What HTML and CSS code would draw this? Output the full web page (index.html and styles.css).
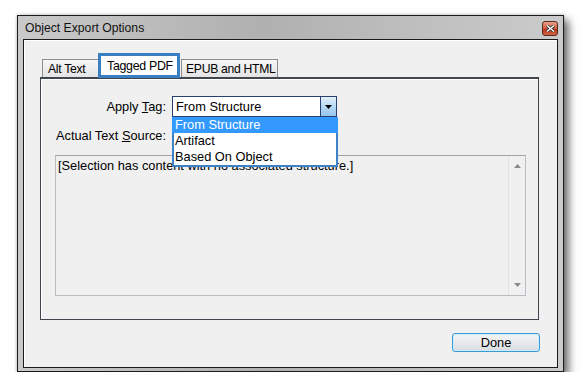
FILE: index.html
```html
<!DOCTYPE html>
<html lang="en">
<head>
    <meta charset="UTF-8">
    <title>Object Export Options</title>
    <link rel="stylesheet" href="styles.css">
</head>
<body>
    <div class="window">
        <div class="titlebar">
            <span class="title">Object Export Options</span>
            <span class="close">
                <svg width="9" height="7" viewBox="0 0 9 7">
                    <path d="M1 0.5 L8 6.5 M8 0.5 L1 6.5" stroke="#333" stroke-width="3"/>
                    <path d="M1 0.5 L8 6.5 M8 0.5 L1 6.5" stroke="#fff" stroke-width="1.4"/>
                </svg>
            </span>
        </div>
        <div class="client">
            <!-- Tabs -->
            <div class="tabs">
                <div class="tab">Alt Text</div>
                <div class="tab active">Tagged PDF</div>
                <div class="tab">EPUB and HTML</div>
            </div>
            <div class="panel">
                <div class="form">
                    <label class="lbl">Apply <u>T</u>ag:</label>
                    <div class="select open">
                        <span class="value">From Structure</span>
                        <span class="arrow">
                            <svg width="7" height="4" viewBox="0 0 7 4"><path d="M0 0 H7 L3.5 4 Z" fill="#000"/></svg>
                        </span>
                        <ul class="list">
                            <li class="selected">From Structure</li>
                            <li>Artifact</li>
                            <li>Based On Object</li>
                        </ul>
                    </div>
                    <label class="lbl">Actual Text <u>S</u>ource:</label>
                    <div class="select under">
                        <span class="value"></span>
                    </div>
                </div>
                <div class="textbox">
                    <div class="text">[Selection has content with no associated structure.]</div>
                    <div class="scroll">
                        <svg width="7" height="4" viewBox="0 0 7 4"><path d="M0 4 H7 L3.5 0 Z" fill="#8a8a8a"/></svg>
                        <svg width="7" height="4" viewBox="0 0 7 4"><path d="M0 0 H7 L3.5 4 Z" fill="#8a8a8a"/></svg>
                    </div>
                </div>
            </div>
            <div class="footer">
                <button class="done">Done</button>
            </div>
        </div>
    </div>
</body>
</html>
```

FILE: styles.css
```css
body {
    margin: 0;
    padding: 15px 0 0 17px;
    background: #ffffff;
    font-family: "Liberation Sans", Arial, sans-serif;
    font-size: 12.8px;
    color: #000000;
}
.window {
    box-sizing: border-box;
    width: 547px;
    height: 357px;
    border: 1px solid #1b1b1b;
    padding: 0 5px 3px 5px;
    background: linear-gradient(to right, #c9c9c9, #b0b0b0 45%, #bdbdbd 70%, #cbcbcb);
    box-shadow: 0 0 3px rgba(0, 0, 0, 0.25), 5px 5px 8px rgba(0, 0, 0, 0.55);
}
.titlebar {
    height: 23px;
    display: flex;
    align-items: flex-start;
    justify-content: space-between;
}
.title {
    margin: 5px 0 0 2px;
    font-size: 12.2px;
    color: #111;
}
.close {
    box-sizing: border-box;
    width: 16px;
    height: 15px;
    margin: 5px 0 0 0;
    border: 1px solid #5a2a20;
    border-radius: 3px;
    background: linear-gradient(#eaa088, #d2583a 50%, #b83212 55%, #d4664a);
    display: flex;
    align-items: center;
    justify-content: center;
}
.client {
    box-sizing: border-box;
    height: 329px;
    border: 1px solid #1b1b1b;
    background: #f0f0f0;
    box-shadow: inset 1px 1px 0 #ffffff;
}
.tabs {
    height: 37px;
    padding-left: 18px;
    display: flex;
    align-items: flex-end;
}
.tab {
    box-sizing: border-box;
    height: 18px;
    padding: 0 5px;
    border: 1px solid #8c8e94;
    border-bottom: none;
    background: linear-gradient(#f6f6f6, #e4e4e4);
    font-size: 12.2px;
    letter-spacing: -0.3px;
    line-height: 18px;
    white-space: nowrap;
    overflow: hidden;
}
.tab:first-child {
    width: 56px;
    border-right: none;
}
.tab:last-child {
    width: 97px;
    margin-left: 1px;
    padding-left: 4px;
}
.tab.active {
    position: relative;
    z-index: 2;
    width: 82px;
    height: 25px;
    margin-bottom: -1px;
    padding: 0 0 0 6px;
    border: 3px solid #3a7fc2;
    background: #ffffff;
    font-size: 12.4px;
    line-height: 20px;
}
.panel {
    box-sizing: border-box;
    height: 243px;
    margin: 0 18px 0 16px;
    border: 1px solid #41464e;
    border-top-width: 2px;
    box-shadow: inset 1px 1px 0 #ffffff;
    padding: 17px 0 0 14px;
}
.form {
    display: grid;
    grid-template-columns: 111px 165px;
    column-gap: 6px;
    row-gap: 8px;
    align-items: center;
}
.lbl {
    text-align: right;
    white-space: nowrap;
}
.select {
    position: relative;
    box-sizing: border-box;
    height: 21px;
    border: 1px solid #283f70;
    background: #ffffff;
    display: flex;
}
.select.under {
    border-color: #9a9a9a;
}
.value {
    flex: 1;
    padding-left: 3px;
    line-height: 19px;
}
.arrow {
    width: 15px;
    border-left: 1px solid #283f70;
    background: linear-gradient(#e3f0fb, #b6d8f3 50%, #98c6ec);
    display: flex;
    align-items: center;
    justify-content: center;
}
.list {
    position: absolute;
    z-index: 3;
    top: 20px;
    left: -1px;
    width: 166px;
    box-sizing: border-box;
    margin: 0;
    padding: 0;
    list-style: none;
    border: 2px solid #3b82c8;
    border-top: none;
    background: #ffffff;
}
.list li {
    height: 16px;
    padding-left: 1px;
    line-height: 16px;
}
.list li.selected {
    margin: 0 -2px;
    padding-left: 3px;
    background: #3399ff;
    color: #ffffff;
}
.textbox {
    box-sizing: border-box;
    width: 471px;
    height: 141px;
    margin-top: 9px;
    border: 1px solid #b9bcc2;
    border-top-color: #a3a3a3;
    display: flex;
}
.text {
    flex: 1;
    padding: 2px 0 0 2px;
}
.scroll {
    width: 16px;
    border-left: 1px solid #e2e2e2;
    display: flex;
    flex-direction: column;
    justify-content: space-between;
    align-items: center;
    padding: 8px 0 8px 0;
}
.footer {
    display: flex;
    justify-content: flex-end;
    padding: 13px 17px 0 0;
}
.done {
    box-sizing: border-box;
    width: 88px;
    height: 19px;
    border: 1px solid #3c9ad8;
    border-radius: 3px;
    background: linear-gradient(#f4f4f4, #e8eaec 50%, #d6dce3);
    box-shadow: inset 0 0 0 1px #c8ecfc;
    font-family: "Liberation Sans", Arial, sans-serif;
    font-size: 12.8px;
    padding: 0;
}
```
